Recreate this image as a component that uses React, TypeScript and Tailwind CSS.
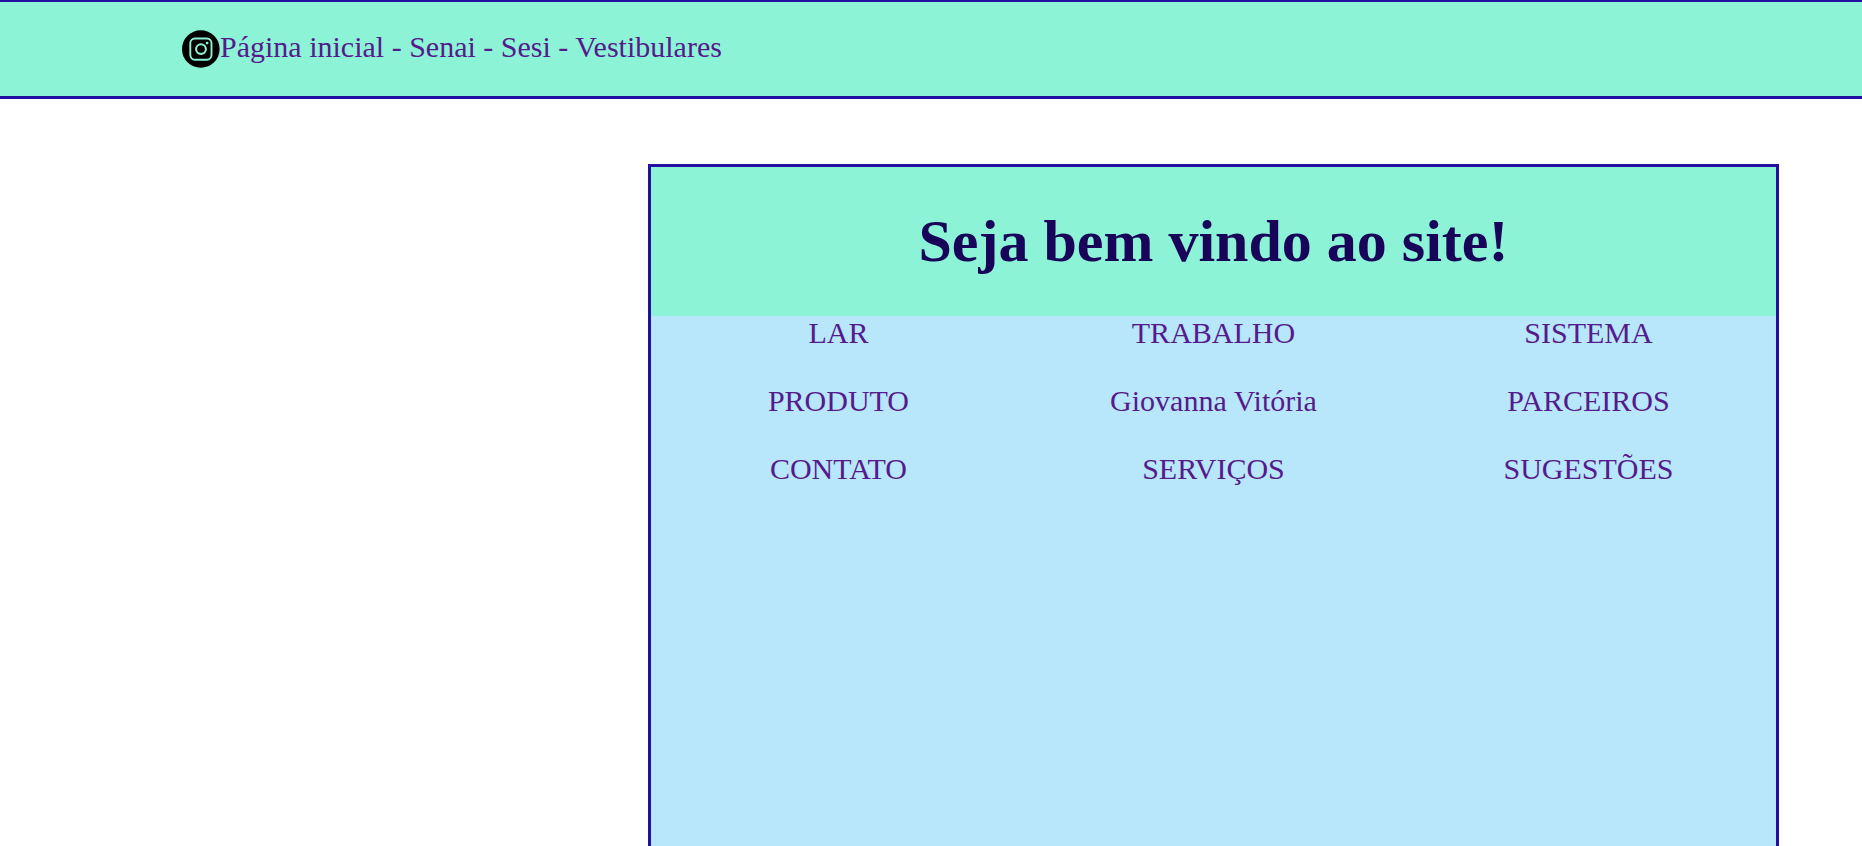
const topLinks = ["Página inicial", "Senai", "Sesi", "Vestibulares"];

const menu = [
  ["LAR", "TRABALHO", "SISTEMA"],
  ["PRODUTO", "Giovanna Vitória", "PARCEIROS"],
  ["CONTATO", "SERVIÇOS", "SUGESTÕES"],
];

function InstagramBadge() {
  return (
    <svg viewBox="0 0 38 38" className="size-[38px] shrink-0" aria-hidden="true">
      <circle cx="18.8" cy="19" r="18.8" fill="#000" />
      <g fill="none" stroke="#8cf3d6">
        <rect x="8.3" y="8.5" width="21.2" height="21.2" rx="4.6" strokeWidth="1.9" />
        <circle cx="19" cy="19.1" r="4.9" strokeWidth="2.1" />
      </g>
      <circle cx="25.1" cy="13.1" r="1.4" fill="#8cf3d6" />
    </svg>
  );
}

export default function App() {
  return (
    <div className="flex h-screen flex-col overflow-hidden bg-white font-['Liberation_Serif',serif] text-[30px] leading-[34px] text-[#551a8b]">
      <header className="flex items-start border-t-2 border-b-3 border-[#2410a0] bg-[#8cf3d6] py-[28px] pl-[182px]">
        <a href="#instagram" aria-label="Instagram">
          <InstagramBadge />
        </a>
        <nav>
          {topLinks.map((label, i) => (
            <span key={label}>
              {i > 0 && " - "}
              <a href="#">{label}</a>
            </span>
          ))}
        </nav>
      </header>

      <main className="mt-[65px] mr-[83px] ml-[34.8%] flex-1 border-x-3 border-t-3 border-[#2410a0] bg-[#b8e6fb]">
        <h1 className="bg-[#8cf3d6] py-[40px] text-center text-[60px] leading-[69px] font-bold text-[#180559]">
          Seja bem vindo ao site!
        </h1>
        <nav className="grid grid-cols-3 gap-y-[34px] text-center">
          {menu.flat().map((label) => (
            <div key={label}>
              <a href="#">{label}</a>
            </div>
          ))}
        </nav>
      </main>
    </div>
  );
}
